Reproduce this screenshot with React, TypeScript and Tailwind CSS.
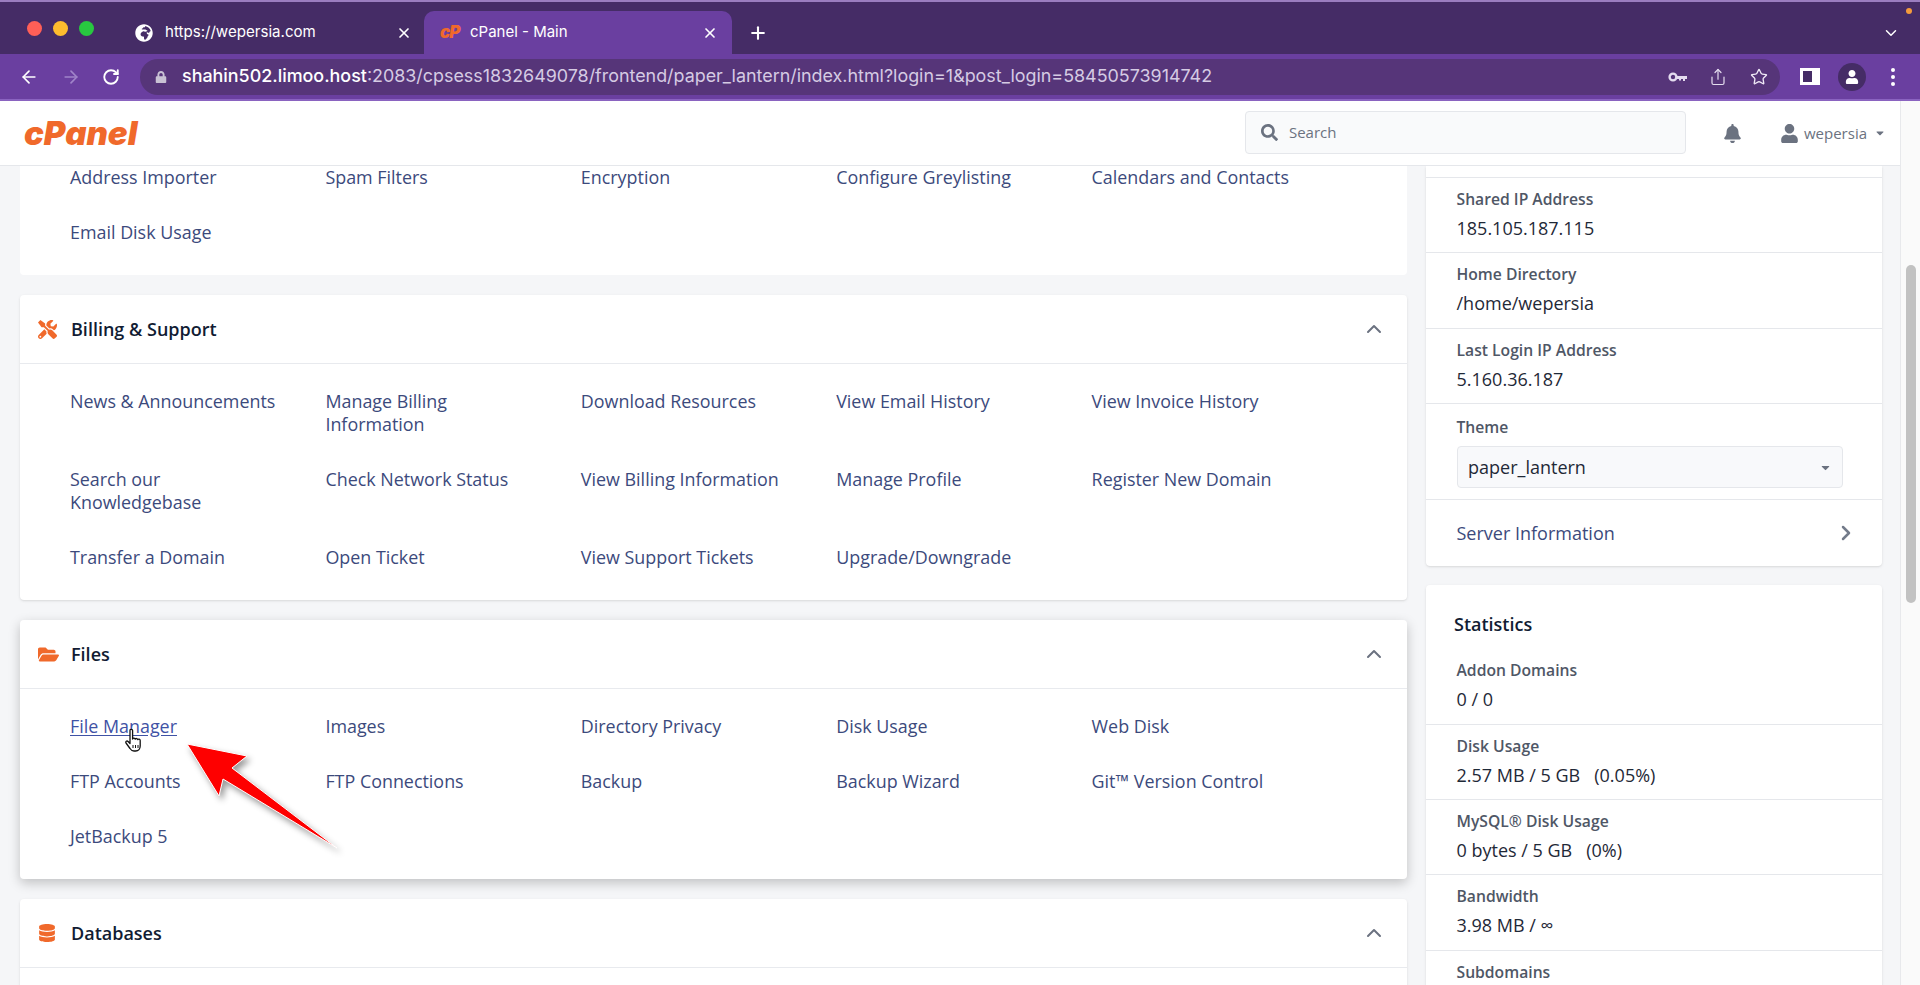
import { ArrowLeft, ArrowRight, RotateCw, Plus, X, ChevronDown, ChevronUp, ChevronRight, Star, Share } from "lucide-react";
import { FaBell, FaUser, FaSearch, FaFolderOpen, FaTools, FaDatabase, FaGlobeAfrica, FaCaretDown, FaLock } from "react-icons/fa";

const billing: string[][] = [
  ["News & Announcements", "Manage Billing Information", "Download Resources", "View Email History", "View Invoice History"],
  ["Search our Knowledgebase", "Check Network Status", "View Billing Information", "Manage Profile", "Register New Domain"],
  ["Transfer a Domain", "Open Ticket", "View Support Tickets", "Upgrade/Downgrade"],
];
const files: string[][] = [
  ["File Manager", "Images", "Directory Privacy", "Disk Usage", "Web Disk"],
  ["FTP Accounts", "FTP Connections", "Backup", "Backup Wizard", "Git™ Version Control"],
  ["JetBackup 5"],
];
const email: string[][] = [
  ["Address Importer", "Spam Filters", "Encryption", "Configure Greylisting", "Calendars and Contacts"],
  ["Email Disk Usage"],
];

function Links({ rows, hover }: { rows: string[][]; hover?: string }) {
  return (
    <div className="grid w-[1327px] grid-cols-5 gap-y-8 pl-[50px]">
      {rows.flatMap((r) =>
        [0, 1, 2, 3, 4].map((i) => {
          const t = r[i];
          return (
            <span
              key={r[0] + i}
              className={
                t === hover
                  ? "w-[215px] text-[17.9px] leading-[23px] text-[#3f52a5] underline underline-offset-2"
                  : "w-[215px] text-[17.9px] leading-[23px] text-[#3c4a7c]"
              }
            >
              {t ?? ""}
            </span>
          );
        })
      )}
    </div>
  );
}

function SectionHeader({ icon, title }: { icon: React.ReactNode; title: string }) {
  return (
    <div className="flex h-[69px] items-center border-b border-[#e8eaee] pl-[18px] pr-[21px]">
      <span className="flex w-[33px] justify-start text-[#f0692b]">{icon}</span>
      <span className="flex-1 text-[18px] font-semibold text-[#111c33]">{title}</span>
      <ChevronUp className="text-[#6b7280]" size={24} strokeWidth={2} />
    </div>
  );
}

function Row({ label, value }: { label: string; value: React.ReactNode }) {
  return (
    <div className="h-[75.4px] border-b border-[#e5e7eb] pl-[30.5px] pt-[11px]">
      <div className="text-[15.7px] font-semibold leading-[21px] text-[#4f5766]">{label}</div>
      <div className="mt-[7px] text-[18px] leading-[23px] text-[#1f2937]">{value}</div>
    </div>
  );
}

export default function App() {
  return (
    <div className="relative flex h-[985px] w-[1920px] flex-col overflow-hidden bg-white font-['Open_Sans',sans-serif]">
      {/* Tab strip */}
      <div className="flex h-[54px] shrink-0 items-end border-t-2 border-[#9a7dbf] bg-[#452c66] font-['Inter',sans-serif] text-white">
        <div className="flex h-[52px] w-[130px] items-center gap-[11px] pl-[27px]">
          <span className="h-[15px] w-[15px] rounded-full bg-[#ff5f57]" />
          <span className="h-[15px] w-[15px] rounded-full bg-[#febc2e]" />
          <span className="h-[15px] w-[15px] rounded-full bg-[#28c840]" />
        </div>
        <div className="flex h-[43px] w-[294px] items-center pr-[12px] text-[15.1px]">
          <FaGlobeAfrica size={18} className="ml-[5px] text-white" />
          <span className="ml-[12px] flex-1">https://wepersia.com</span>
          <X size={16} strokeWidth={2.5} />
        </div>
        <div className="flex h-[43px] w-[308px] items-center rounded-t-[10px] bg-[#6a3fa0] pl-[16px] pr-[14px] text-[15px]">
          <span className="w-[30px] text-[17px] font-black italic leading-none tracking-[-1px] text-[#f0692b]">cP</span>
          <span className="flex-1">cPanel - Main</span>
          <X size={16} strokeWidth={2.5} />
        </div>
        <div className="flex h-[43px] items-center pl-[16px]">
          <Plus size={20} strokeWidth={2.5} />
        </div>
        <div className="flex h-[43px] flex-1 items-center justify-end pr-[20px]">
          <ChevronDown size={18} strokeWidth={2} />
        </div>
      </div>
      <span className="absolute right-[8px] top-[8px] h-[6px] w-[6px] rounded-full bg-[#f59b3c]" />

      {/* Toolbar */}
      <div className="flex h-[47px] shrink-0 items-center border-b-2 border-[#8a63c0] bg-[#6a3fa0] text-white">
        <div className="flex w-[140px] items-center pl-[19px]">
          <ArrowLeft size={20} strokeWidth={2} />
          <ArrowRight size={20} strokeWidth={2} className="ml-[22px] text-[#a084c9]" />
          <RotateCw size={18} strokeWidth={2.5} className="ml-[21px]" />
        </div>
        <div className="flex h-[36px] w-[1640px] items-center rounded-full bg-[#563579] pl-[15px]">
          <FaLock size={12} className="text-[#c9c2d4]" />
          <span className="ml-[15px] flex-1 font-['Inter',sans-serif] text-[17.9px]">
            <span className="font-medium text-white">shahin502.limoo.host</span>
            <span className="text-[#d5cbe3]">:2083/cpsess1832649078/frontend/paper_lantern/index.html?login=1&amp;post_login=58450573914742</span>
          </span>
          <svg width="20" height="12" viewBox="0 0 20 12" className="mr-[21px] text-[#e4dcef]">
            <circle cx="5" cy="6" r="3.4" fill="none" stroke="currentColor" strokeWidth="2.4" />
            <path d="M8 5h11v3h-2v2h-2V8h-2v1.5h-2V8H8z" fill="currentColor" />
          </svg>
          <Share size={18} strokeWidth={1.6} className="mr-[23px] text-[#e4dcef]" />
          <Star size={18} strokeWidth={1.8} className="mr-[12px] text-[#efe9f6]" />
        </div>
        <div className="ml-[20px] h-[17px] w-[20px] border-[3px] border-white bg-[#452c66] pl-[9px]">
          <div className="h-full w-full bg-white" />
        </div>
        <div className="ml-[18px] flex h-[28px] w-[28px] items-center justify-center rounded-full bg-[#452c66]">
          <FaUser size={14} className="text-white" />
        </div>
        <div className="ml-[25px] flex flex-col gap-[3px]">
          <span className="h-[4px] w-[4px] rounded-full bg-white" />
          <span className="h-[4px] w-[4px] rounded-full bg-white" />
          <span className="h-[4px] w-[4px] rounded-full bg-white" />
        </div>
      </div>

      <div className="flex min-h-0 flex-1">
        <div className="flex w-[1900px] flex-col">
          {/* cPanel header */}
          <div className="flex h-[65px] shrink-0 items-center border-b border-[#e5e7eb] bg-white">
            <span className="ml-[24px] font-['Inter',sans-serif] text-[33px] font-black italic leading-none text-[#f0692b]">cPanel</span>
            <div className="mb-[1px] ml-auto flex h-[43px] w-[441px] items-center rounded-[4px] border border-[#e5e7eb] bg-[#f9fafb] pl-[15px] text-[15px] text-[#6b7280]">
              <FaSearch size={17} className="text-[#6b7280]" />
              <span className="ml-[11px]">Search</span>
            </div>
            <FaBell size={19} className="ml-[37px] text-[#6b7280]" />
            <FaUser size={19} className="ml-[38px] text-[#6b7280]" />
            <span className="ml-[5px] text-[15px] text-[#6b7280]">wepersia</span>
            <FaCaretDown size={12} className="ml-[7px] mr-[14px] text-[#6b7280]" />
          </div>

          {/* Body */}
          <div className="flex min-h-0 flex-1 gap-[19px] overflow-hidden bg-[#f5f6f8] pl-[20px]">
            <div className="flex w-[1387px] shrink-0 flex-col gap-5">
              <section className="rounded-b-[4px] bg-white pb-[31px]">
                <Links rows={email} />
              </section>
              <section className="rounded-[4px] bg-white pb-[31px] shadow-sm">
                <SectionHeader icon={<FaTools size={19} />} title="Billing & Support" />
                <div className="pt-[26px]"><Links rows={billing} /></div>
              </section>
              <section className="rounded-[4px] bg-white pb-[31px] shadow-[0_4px_12px_rgba(0,0,0,0.22)]">
                <SectionHeader icon={<FaFolderOpen size={21} />} title="Files" />
                <div className="pt-[26px]"><Links rows={files} hover="File Manager" /></div>
              </section>
              <section className="rounded-t-[4px] bg-white pb-[60px] shadow-sm">
                <SectionHeader icon={<FaDatabase size={18} />} title="Databases" />
              </section>
            </div>

            <div className="flex w-[456px] shrink-0 flex-col gap-[19px]">
              <section className="rounded-b-[4px] bg-white shadow-sm">
                <div className="h-[12px] border-b border-[#e5e7eb]" />
                <Row label="Shared IP Address" value="185.105.187.115" />
                <Row label="Home Directory" value="/home/wepersia" />
                <Row label="Last Login IP Address" value="5.160.36.187" />
                <div className="h-[96px] border-b border-[#e5e7eb] pl-[30.5px] pt-[13px]">
                  <div className="text-[15.7px] font-semibold leading-[21px] text-[#4f5766]">Theme</div>
                  <div className="mt-[8px] flex h-[42px] w-[386px] items-center justify-between rounded-[4px] border border-[#e5e7eb] bg-[#f8f9fb] pl-[10.500px] pr-[10px] text-[18px] text-[#1f2937]">
                    paper_lantern
                    <FaCaretDown size={13} className="text-[#6b7280]" />
                  </div>
                </div>
                <div className="flex h-[66px] items-center justify-between pl-[30.5px] pr-[24px] text-[18px] text-[#3c4a7c]">
                  Server Information
                  <ChevronRight size={24} strokeWidth={2.5} className="text-[#737b8a]" />
                </div>
              </section>
              <section className="rounded-t-[4px] bg-white shadow-sm">
                <div className="flex h-[64px] items-end pb-[11px] pl-[28px] text-[18px] font-semibold text-[#111c33]">Statistics</div>
                <Row label="Addon Domains" value="0 / 0" />
                <Row label="Disk Usage" value={<span className="whitespace-pre">2.57 MB / 5 GB   (0.05%)</span>} />
                <Row label="MySQL® Disk Usage" value={<span className="whitespace-pre">0 bytes / 5 GB   (0%)</span>} />
                <Row label="Bandwidth" value="3.98 MB / ∞" />
                <Row label="Subdomains" value="" />
              </section>
            </div>
          </div>
        </div>

        {/* Scrollbar */}
        <div className="flex w-[20px] shrink-0 flex-col border-l border-[#e8e9ec] bg-[#fafafa] pl-[5px] pt-[164px]">
          <div className="h-[338px] w-[10px] rounded-full bg-[#c2c2c2]" />
        </div>
      </div>

      {/* Annotation arrow and cursor */}
      <svg className="pointer-events-none absolute left-0 top-0" width="400" height="900" viewBox="0 0 400 900" style={{ filter: "drop-shadow(3px 4px 3px rgba(0,0,0,0.4))" }}>
        <polygon points="187,744 247,756 232,768 337,848 223,779 219,796" fill="#fe0000" stroke="#ffffff" strokeWidth="1" />
      </svg>
      <svg className="pointer-events-none absolute left-[124px] top-[728px]" width="22" height="26" viewBox="0 0 22 26">
        <path d="M6 2.5c0-1.6 2.6-1.6 2.6 0V11c.4-1.2 2.4-1.2 2.6.2.5-1 2.4-.9 2.6.4.6-.8 2.4-.5 2.4 1V18c0 2.7-1.8 5-4.5 5H10c-1.800 0-3-.9-4-2.500L2 15c-1-1.500.9-2.700 2.100-1.500L6 15.500z" fill="#fff" stroke="#111" strokeWidth="1.300" strokeLinejoin="round" />
        <path d="M9 17v3M11.500 17v3M14 17v3" stroke="#111" strokeWidth="1" />
      </svg>
    </div>
  );
}
